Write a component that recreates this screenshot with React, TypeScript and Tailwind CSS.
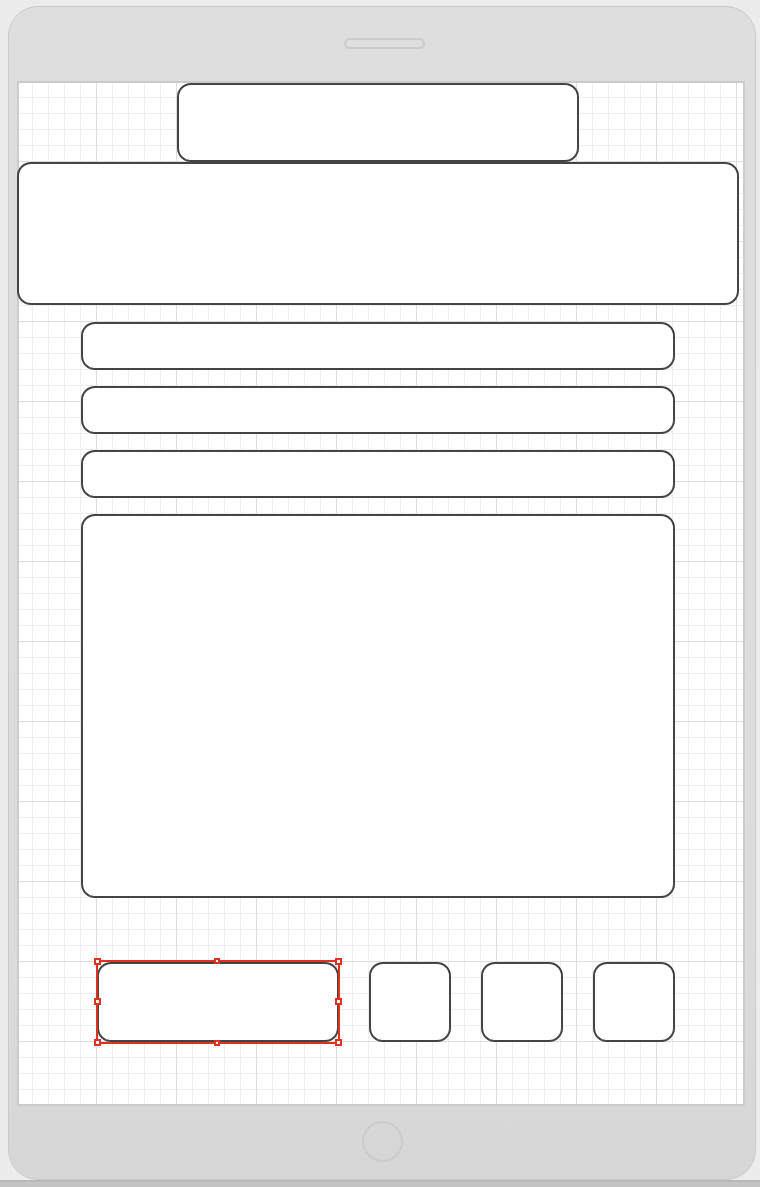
const box = "bg-white border-2 border-[#444444] rounded-[14px] shrink-0";

function Handle({ className }: { className: string }) {
  return <div className={`absolute w-[7px] h-[7px] bg-white border-2 border-[#e0301e] ${className}`} />;
}

export default function App() {
  return (
    <div className="w-[760px] h-[1187px] bg-[#ececec] flex flex-col overflow-hidden" style={{ fontFamily: "'Liberation Sans', sans-serif" }}>
      <div className="flex-1 pt-[6px] pl-[8px]">
        {/* device body */}
        <div className="w-[748px] h-[1174px] rounded-[30px] border border-[#c9c9c9] bg-[linear-gradient(to_bottom,#dedede,#dcdcdc_80%,#d6d6d6)] flex flex-col">
          <div className="ml-[335px] mt-[31px] w-[81px] h-[11px] rounded-full border-2 border-[#cbcbcb]" />

          {/* screen */}
          <div className="ml-[8px] mt-[32px] w-[728px] h-[1025px] border-2 border-[#cbcbcb] bg-white [background-image:linear-gradient(to_right,#dedede_1px,transparent_1px),linear-gradient(to_bottom,#dedede_1px,transparent_1px),linear-gradient(to_right,#eeeeee_1px,transparent_1px),linear-gradient(to_bottom,#eeeeee_1px,transparent_1px)] [background-size:80px_80px,80px_80px,16px_16px,16px_16px] [background-position:77px_78px,77px_78px,13px_14px,13px_14px] flex flex-col">
            <div className={`${box} ml-[158px] w-[402px] h-[79px]`} />
            <div className={`${box} -ml-[2px] w-[722px] h-[143px]`} />
            <div className={`${box} ml-[62px] mt-[17px] w-[594px] h-[48px]`} />
            <div className={`${box} ml-[62px] mt-[16px] w-[594px] h-[48px]`} />
            <div className={`${box} ml-[62px] mt-[16px] w-[594px] h-[48px]`} />
            <div className={`${box} ml-[62px] mt-[16px] w-[594px] h-[384px]`} />

            <div className="ml-[78px] mt-[64px] flex gap-[30px]">
              <div className="relative">
                <div className={`${box} w-[242px] h-[80px]`} />
                {/* selection */}
                <div className="absolute -left-[1px] -top-[2px] w-[244px] h-[84px] border-2 border-[#e0301e]">
                  <Handle className="-left-[4px] -top-[4px]" />
                  <Handle className="left-[116px] -top-[4px] !w-[6px] !h-[6px]" />
                  <Handle className="-right-[4px] -top-[4px]" />
                  <Handle className="-left-[4px] top-[36px]" />
                  <Handle className="-right-[4px] top-[36px]" />
                  <Handle className="-left-[4px] -bottom-[4px]" />
                  <Handle className="left-[116px] -bottom-[4px] !w-[6px] !h-[6px]" />
                  <Handle className="-right-[4px] -bottom-[4px]" />
                </div>
              </div>
              <div className={`${box} w-[82px] h-[80px]`} />
              <div className={`${box} w-[82px] h-[80px]`} />
              <div className={`${box} w-[82px] h-[80px]`} />
            </div>
          </div>

          <div className="ml-[353px] mt-[15px] w-[41px] h-[41px] rounded-full border-2 border-[#cbcbcb]" />
        </div>
      </div>
      <div className="h-[7px] shrink-0 bg-[#c4c4c4] border-t-2 border-[#b8b8b8]" />
    </div>
  );
}
